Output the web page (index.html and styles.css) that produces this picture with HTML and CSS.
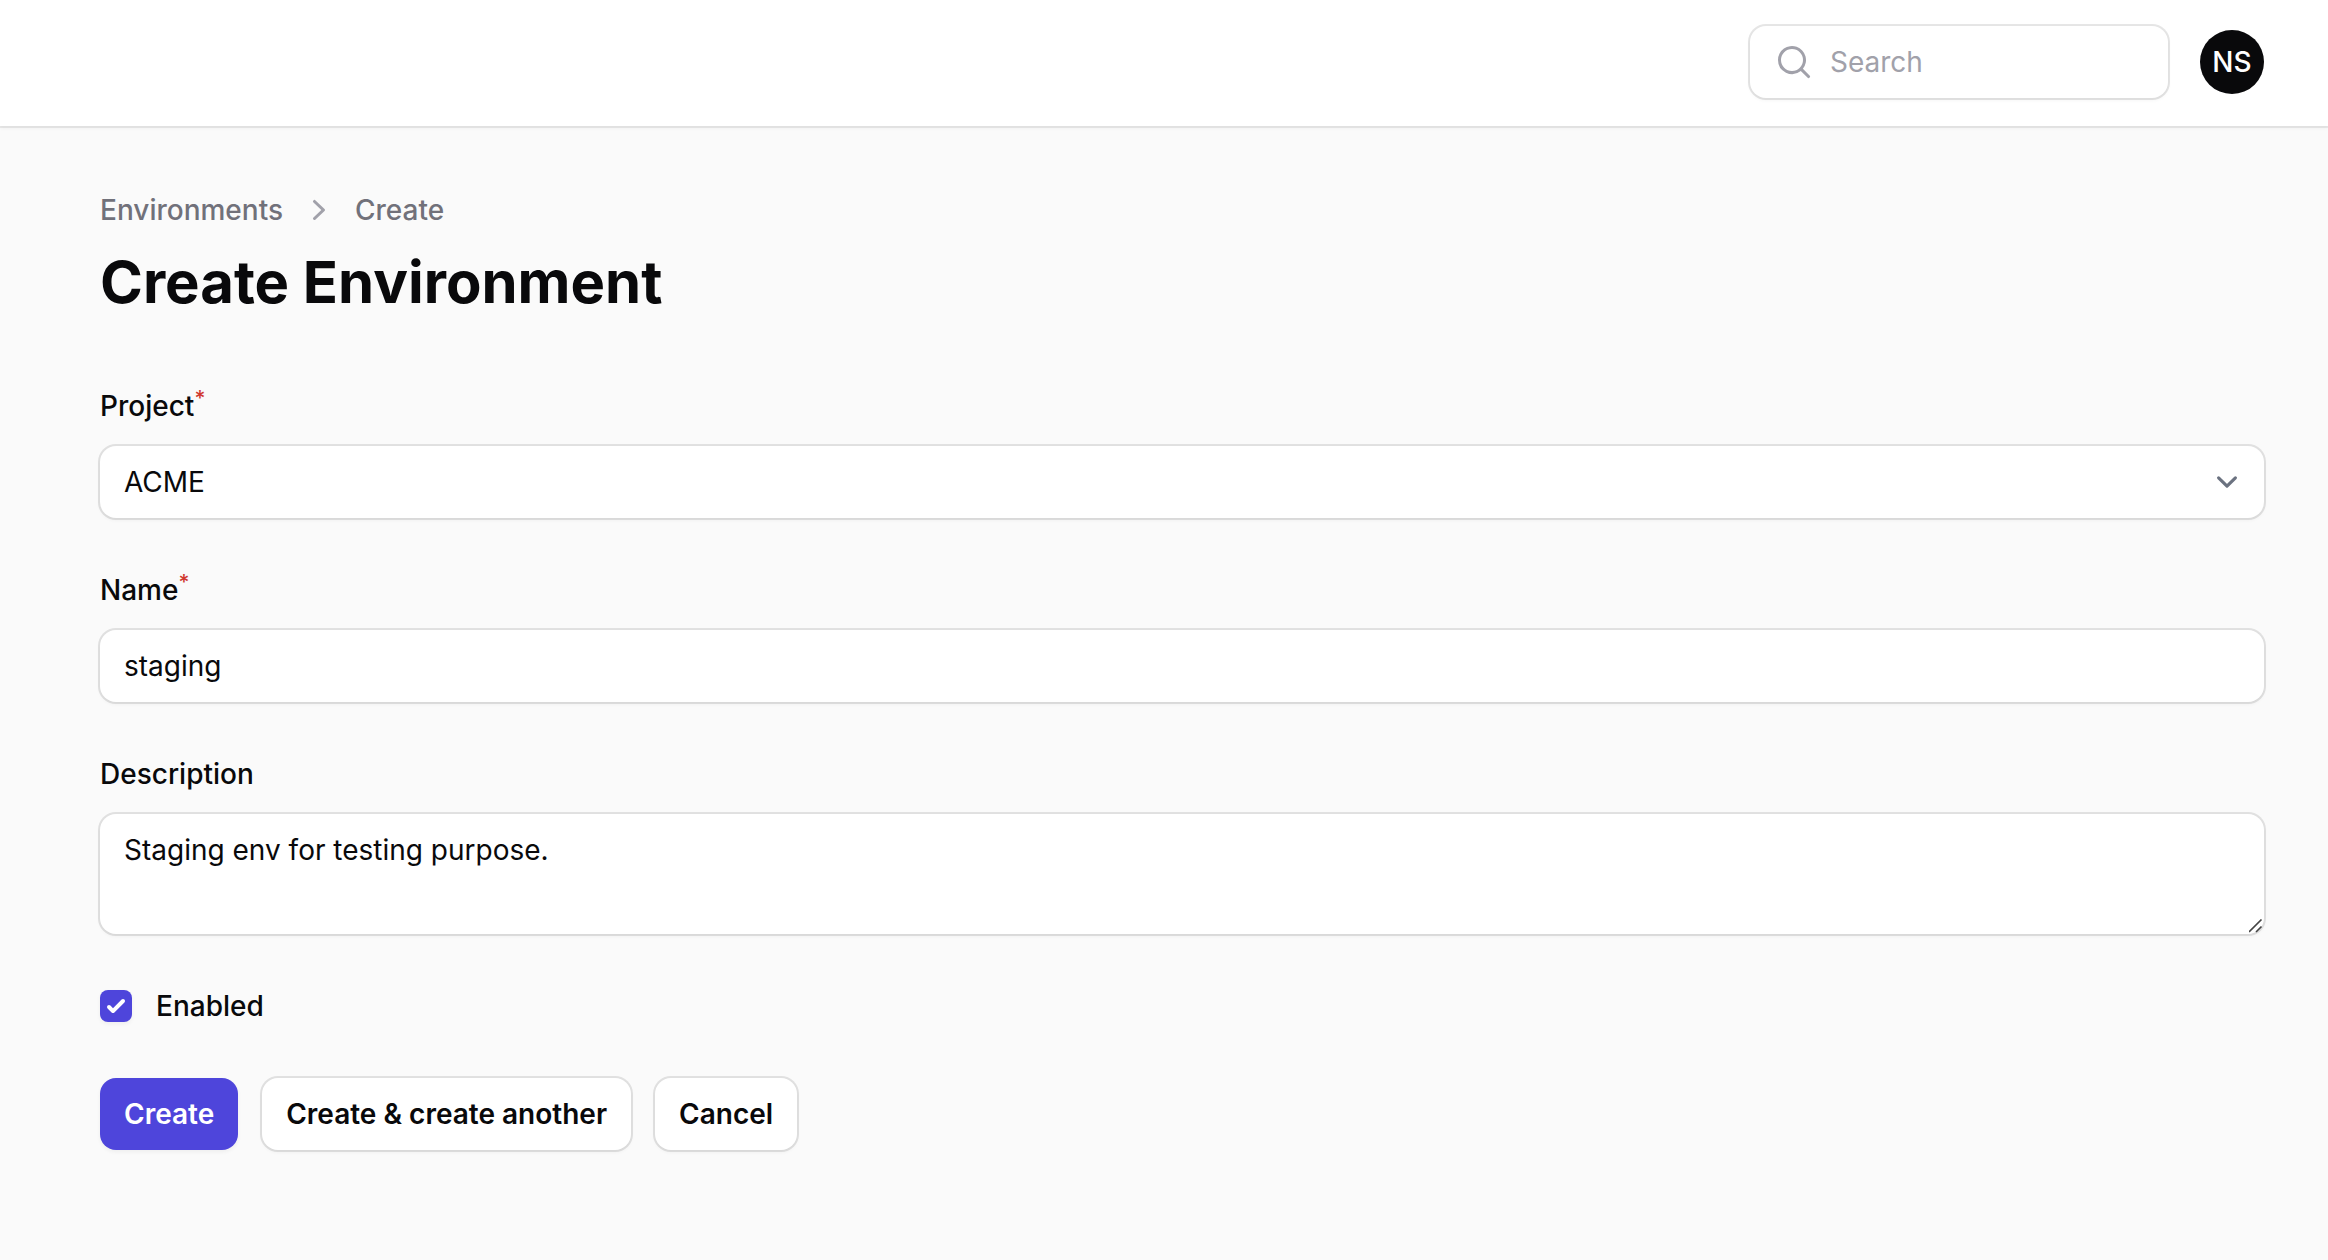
FILE: index.html
```html
<!DOCTYPE html>
<html lang="en">
<head>
<meta charset="utf-8">
<meta name="viewport" content="width=device-width, initial-scale=1">
<title>Create Environment</title>
<link rel="stylesheet" href="styles.css">
</head>
<body>
<header class="topbar">
  <label class="search" for="search">
    <svg class="icon search-icon" viewBox="0 0 20 20" aria-hidden="true"><path fill-rule="evenodd" d="M9 3.5a5.5 5.5 0 1 0 0 11 5.5 5.5 0 0 0 0-11ZM2 9a7 7 0 1 1 12.452 4.391l3.328 3.329a.75.75 0 1 1-1.06 1.06l-3.329-3.328A7 7 0 0 1 2 9Z" clip-rule="evenodd"/></svg>
    <input class="search-input" id="search" type="search" placeholder="Search" aria-label="Search">
  </label>
  <button class="avatar" type="button" aria-label="User menu">NS</button>
</header>
<main class="page">
  <div class="page-header">
    <nav class="breadcrumbs" aria-label="Breadcrumb">
      <a class="crumb" href="#">Environments</a>
      <svg class="icon" viewBox="0 0 20 20" aria-hidden="true"><path fill-rule="evenodd" d="M7.21 14.77a.75.75 0 0 1 .02-1.06L11.168 10 7.23 6.29a.75.75 0 1 1 1.04-1.08l4.5 4.25a.75.75 0 0 1 0 1.08l-4.5 4.25a.75.75 0 0 1-1.06-.02Z" clip-rule="evenodd"/></svg>
      <a class="crumb" href="#">Create</a>
    </nav>
    <h1 class="title">Create Environment</h1>
  </div>
  <form class="form">
    <div class="field">
      <label class="label" for="project">Project<sup class="required">*</sup></label>
      <select class="control select" id="project"><option>ACME</option></select>
    </div>
    <div class="field">
      <label class="label" for="name">Name<sup class="required">*</sup></label>
      <input class="control" id="name" type="text" value="staging">
    </div>
    <div class="field">
      <label class="label" for="description">Description</label>
      <textarea class="control textarea" id="description" rows="2" spellcheck="false">Staging env for testing purpose.</textarea>
    </div>
    <label class="label check-row" for="enabled"><input class="checkbox" id="enabled" type="checkbox" checked>Enabled</label>
    <div class="actions">
      <button class="button button-primary" type="button">Create</button>
      <button class="button" type="button">Create &amp; create another</button>
      <button class="button" type="button">Cancel</button>
    </div>
  </form>
</main>
</body>
</html>
```
FILE: styles.css
```css
:root {
  --ink: #09090b;
  --primary: #4e45db;
  --ring: 0 0 0 2px rgba(9, 9, 11, 0.1);
  --shadow: 0 2px 4px rgba(0, 0, 0, 0.05);
}

*, *::before, *::after { box-sizing: border-box; }

body {
  margin: 0;
  background: #fafafa;
  color: var(--ink);
  font-family: Inter, "Liberation Sans", sans-serif;
  font-size: 28px;
  line-height: 48px;
  -webkit-font-smoothing: antialiased;
}

button, input, select, textarea { font: inherit; color: inherit; }

.icon {
  width: 40px;
  height: 40px;
  flex: none;
  fill: #a1a1aa;
}

.topbar {
  display: flex;
  justify-content: flex-end;
  align-items: center;
  gap: 32px;
  padding: 26px 64px 28px;
  background: #fff;
  box-shadow: 0 0 0 2px rgba(9, 9, 11, 0.07), var(--shadow);
}

.search {
  display: flex;
  align-items: center;
  gap: 16px;
  width: 418px;
  height: 72px;
  padding: 0 24px;
  border-radius: 16px;
  background: #fff;
  box-shadow: var(--ring), var(--shadow);
}

.search-input {
  flex: 1;
  min-width: 0;
  padding: 0;
  border: 0;
  outline: 0;
  background: none;
  appearance: none;
}

.search-input::placeholder { color: #a1a1aa; opacity: 1; }

.avatar {
  display: grid;
  place-items: center;
  width: 64px;
  height: 64px;
  padding: 0;
  border: 0;
  border-radius: 50%;
  background: var(--ink);
  color: #fff;
  font-weight: 500;
}

.page { padding: 64px 64px 64px 100px; }

.page-header { margin-bottom: 64px; }

.breadcrumbs {
  display: flex;
  align-items: center;
  gap: 16px;
  margin-bottom: 16px;
}

.crumb {
  color: #71717a;
  font-weight: 500;
  line-height: 40px;
  text-decoration: none;
}

.title {
  margin: 0;
  font-size: 58px;
  font-weight: 700;
  line-height: 72px;
}

.form { display: grid; gap: 48px; }

.field { display: grid; gap: 16px; }

.label {
  justify-self: start;
  height: 48px;
  font-weight: 500;
}

.required {
  color: #d0382f;
  font-size: 21px;
  line-height: 0;
}

.control {
  display: block;
  width: 100%;
  margin: 0;
  padding: 12px 24px;
  border: 0;
  border-radius: 16px;
  outline: 0;
  background: #fff;
  box-shadow: var(--ring), var(--shadow);
}

.select {
  appearance: none;
  padding-right: 72px;
  background: #fff url("data:image/svg+xml,%3Csvg xmlns='http://www.w3.org/2000/svg' fill='none' viewBox='0 0 20 20'%3E%3Cpath stroke='%236b7280' stroke-linecap='round' stroke-linejoin='round' stroke-width='1.5' d='m6 8 4 4 4-4'/%3E%3C/svg%3E") no-repeat right 16px center / 42px 42px;
}

.control, .select { min-height: 72px; }

.textarea {
  height: 120px;
  resize: vertical;
}

.textarea::-webkit-resizer {
  background: url("data:image/svg+xml,%3Csvg xmlns='http://www.w3.org/2000/svg' width='15' height='15' fill='none' stroke='%23444' stroke-width='1.6'%3E%3Cpath d='M0 13 12.5.5M7 13l5.5-5.5'/%3E%3C/svg%3E") no-repeat;
}

.check-row {
  display: flex;
  align-items: center;
  gap: 24px;
}

.checkbox {
  appearance: none;
  width: 32px;
  height: 32px;
  margin: 0;
  border-radius: 8px;
  background: #fff;
  box-shadow: var(--ring), var(--shadow);
}

.checkbox:checked {
  background: var(--primary) url("data:image/svg+xml,%3Csvg viewBox='0 0 16 16' fill='white' xmlns='http://www.w3.org/2000/svg'%3E%3Cpath d='M12.207 4.793a1 1 0 0 1 0 1.414l-5 5a1 1 0 0 1-1.414 0l-2-2a1 1 0 0 1 1.414-1.414L6.5 9.086l4.293-4.293a1 1 0 0 1 1.414 0z'/%3E%3C/svg%3E") center / 32px no-repeat;
  box-shadow: var(--shadow);
}

.actions { display: flex; flex-wrap: wrap; gap: 24px; }

.button {
  height: 72px;
  padding: 0 24px;
  border: 0;
  border-radius: 16px;
  background: #fff;
  box-shadow: var(--ring), var(--shadow);
  font-weight: 600;
}

.button-primary {
  background: var(--primary);
  box-shadow: var(--shadow);
  color: #fff;
}
```
